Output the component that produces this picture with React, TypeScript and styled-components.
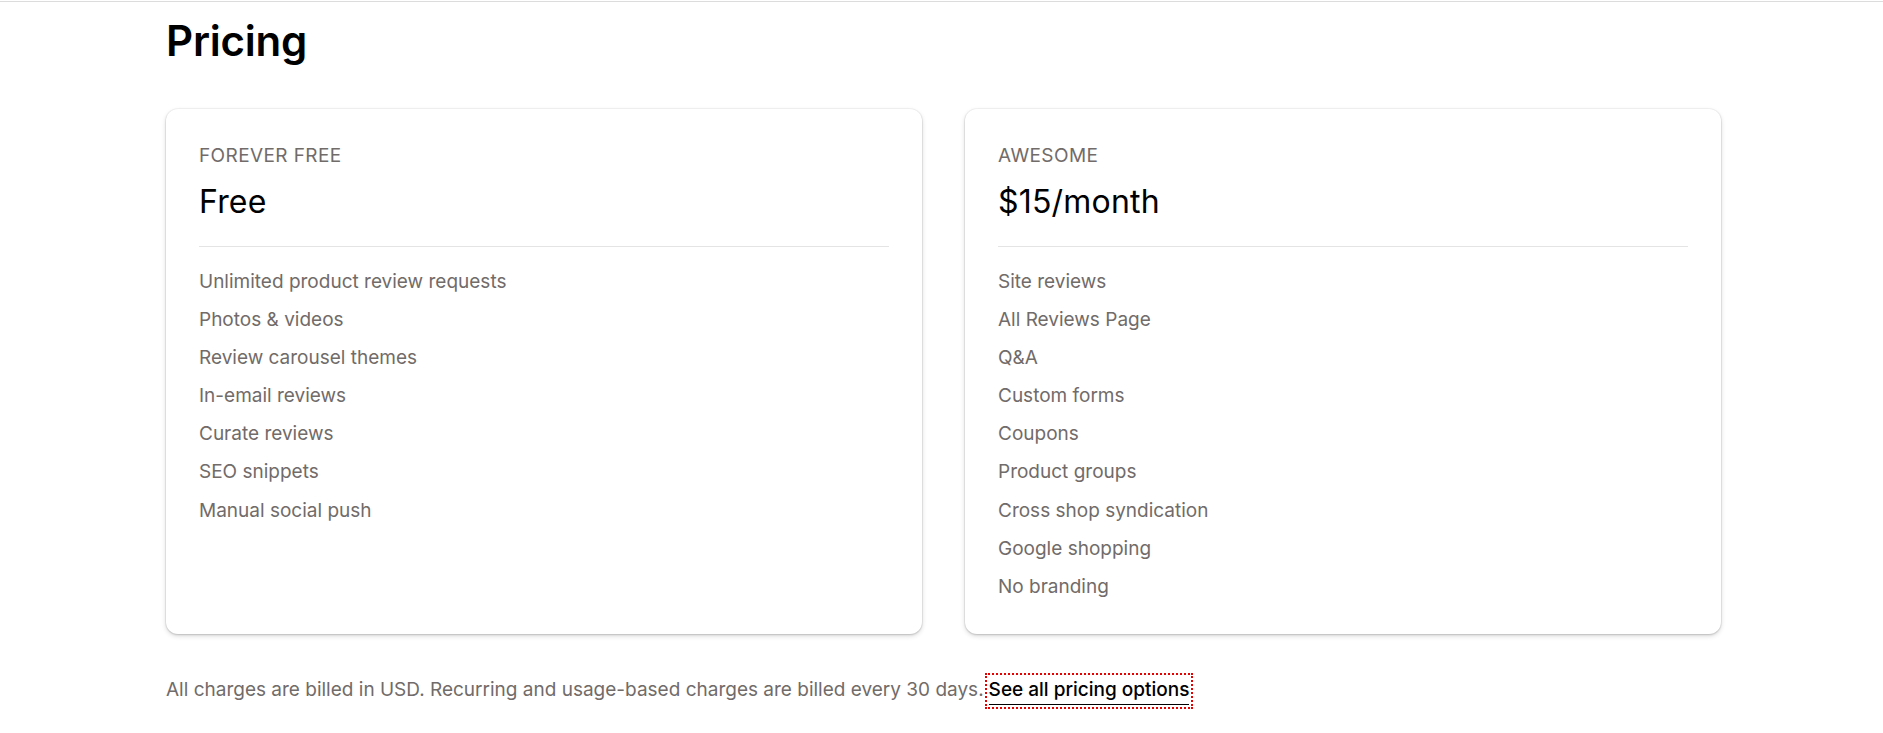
import React from "react";
import styled, { createGlobalStyle } from "styled-components";

const GlobalStyle = createGlobalStyle`
  html, body {
    margin: 0;
    padding: 0;
    background: #ffffff;
  }
  body {
    font-family: Inter, "Noto Sans", "Liberation Sans", sans-serif;
    color: #000000;
    -webkit-font-smoothing: antialiased;
  }
`;

const Page = styled.div`
  width: 1883px;
  min-height: 733px;
  background: #ffffff;
`;

const TopRule = styled.div`
  margin-top: 1px;
  height: 1px;
  background: #dcdcdc;
`;

const Section = styled.section`
  width: 1555px;
  margin-left: 166px;
`;

const Heading = styled.h2`
  margin: 14px 0 0;
  font-size: 42px;
  line-height: 50px;
  font-weight: 600;
  letter-spacing: -0.2px;
  color: #000000;
`;

const Grid = styled.div`
  margin-top: 43px;
  display: grid;
  grid-template-columns: 1fr 1fr;
  gap: 43px;
  align-items: stretch;
`;

const Card = styled.article`
  background: #ffffff;
  border-radius: 12px;
  padding: 32px 33px 27px;
  box-shadow: 0 0 0 1px rgba(0, 0, 0, 0.04), 0 1px 2px rgba(0, 0, 0, 0.12),
    0 2px 5px rgba(0, 0, 0, 0.15);
  min-height: 525px;
  box-sizing: border-box;
`;

const PlanName = styled.div`
  font-size: 19px;
  line-height: 30px;
  text-transform: uppercase;
  letter-spacing: 0.4px;
  color: #716b69;
`;

const Price = styled.div`
  margin-top: 11px;
  font-size: 32px;
  line-height: 40px;
  font-weight: 400;
  letter-spacing: 0.2px;
  color: #000000;
`;

const Divider = styled.hr`
  margin: 24px 0 0;
  border: 0;
  height: 1px;
  background: #e4e4e4;
`;

const Features = styled.ul`
  list-style: none;
  margin: 16px 0 0;
  padding: 0;
`;

const Feature = styled.li`
  font-size: 19px;
  line-height: 38.1px;
  color: #716b69;
`;

const Note = styled.p`
  margin: 42px 0 0;
  font-size: 19px;
  line-height: 28px;
  color: #716b69;
`;

const Link = styled.a`
  display: inline-block;
  margin-left: 5px;
  padding: 0 0 1px;
  line-height: 26px;
  color: #000000;
  font-weight: 500;
  text-decoration: none;
  border-bottom: 1.5px solid #000000;
  outline: 2px dotted #e60000;
  outline-offset: 2px;
`;

const plans = [
  {
    name: "Forever free",
    price: "Free",
    features: [
      "Unlimited product review requests",
      "Photos & videos",
      "Review carousel themes",
      "In-email reviews",
      "Curate reviews",
      "SEO snippets",
      "Manual social push",
    ],
  },
  {
    name: "Awesome",
    price: "$15/month",
    features: [
      "Site reviews",
      "All Reviews Page",
      "Q&A",
      "Custom forms",
      "Coupons",
      "Product groups",
      "Cross shop syndication",
      "Google shopping",
      "No branding",
    ],
  },
];

export default function App() {
  return (
    <Page>
      <GlobalStyle />
      <TopRule />
      <Section>
        <Heading>Pricing</Heading>
        <Grid>
          {plans.map((plan) => (
            <Card key={plan.name}>
              <PlanName>{plan.name}</PlanName>
              <Price>{plan.price}</Price>
              <Divider />
              <Features>
                {plan.features.map((f) => (
                  <Feature key={f}>{f}</Feature>
                ))}
              </Features>
            </Card>
          ))}
        </Grid>
        <Note>
          All charges are billed in USD. Recurring and usage-based charges are
          billed every 30 days.
          <Link href="#">See all pricing options</Link>
        </Note>
      </Section>
    </Page>
  );
}
